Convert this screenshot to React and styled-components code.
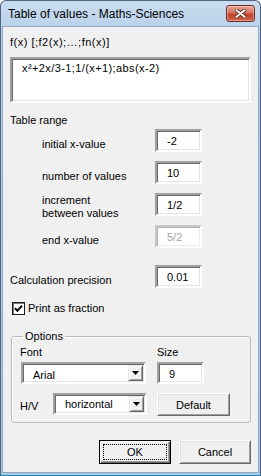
import React from 'react'
import styled, { createGlobalStyle } from 'styled-components'

const GlobalStyle = createGlobalStyle`
  html, body { margin:0; padding:0; background:#fff; }
  * { box-sizing:border-box; }
`

const Window = styled.div`
  width:261px;
  height:476px;
  border:1px solid #4a6481;
  border-bottom-color:#2a86b8;
  border-radius:6px 6px 0 0;
  background:linear-gradient(#cadcf0, #bad2eb 26px, #a9c8e6);
  padding:0 1px 2px;
  display:flex;
  flex-direction:column;
  font-family:"Liberation Sans", Arial, sans-serif;
  font-size:11px;
  color:#000;
`
const TitleBar = styled.div`
  height:25px;
  display:flex;
  align-items:center;
  justify-content:space-between;
  padding:0 4px 0 6px;
  font-size:12px;
`
const CloseButton = styled.div`
  width:29px;
  height:17px;
  border:1px solid #6e2b22;
  border-radius:3px;
  background:linear-gradient(#e8a796, #d5735d 45%, #c2412a 55%, #d0654c);
  box-shadow:inset 0 0 0 1px rgba(255,255,255,0.35);
  display:flex;
  align-items:center;
  justify-content:center;
`
const Client = styled.div`
  flex:1;
  background:#f0f0f0;
  border:1px solid #8ea8c5;
  padding:8px 7px 0;
  display:flex;
  flex-direction:column;
`
const Caption = styled.div`
  line-height:14px;
  margin-top:${p => p.$mt || 0}px;
  letter-spacing:${p => p.$wide ? 0.5 : 0}px;
  white-space:nowrap;
`
const FormulaBox = styled.div`
  margin-top:8px;
  width:241px;
  height:46px;
  background:#fff;
  border:2px solid;
  border-color:#a0a0a0 #fff #fff #a0a0a0;
  box-shadow:inset 1px 1px #696969, inset -1px -1px #e3e3e3;
  padding:2px 10px;
  line-height:14px;
  letter-spacing:0.4px;
  font-size:11px;
`
const RangeGrid = styled.div`
  margin-top:2px;
  padding-left:32px;
  display:grid;
  grid-template-columns:113px 47px;
  grid-auto-rows:23px;
  row-gap:9px;
`
const RowLabel = styled.div`
  padding-top:${p => p.$two ? 1 : 8}px;
  line-height:${p => p.$two ? 13 : 14}px;
  white-space:nowrap;
`
const Field = styled.div`
  width:${p => p.$w || 47}px;
  height:${p => p.$h || 23}px;
  background:#fff;
  border:2px solid;
  border-color:${p => p.$disabled ? '#c8c8c8 #fff #fff #c8c8c8' : '#a0a0a0 #fff #fff #a0a0a0'};
  box-shadow:${p => p.$disabled ? 'inset 1px 1px #b0b0b0, inset -1px -1px #ececec' : 'inset 1px 1px #696969, inset -1px -1px #e3e3e3'};
  padding:3px 0 0 10px;
  line-height:14px;
  color:${p => p.$disabled ? '#a3a3a3' : '#000'};
`
const PrecisionRow = styled.div`
  margin-top:17px;
  display:grid;
  grid-template-columns:145px 47px;
  height:23px;
`
const CheckRow = styled.div`
  margin-top:14px;
  display:flex;
  align-items:center;
  gap:3px;
  padding-left:2px;
  line-height:13px;
`
const CheckBox = styled.div`
  width:13px;
  height:13px;
  background:#fff;
  border:1px solid #1c1c1c;
  box-shadow:inset 1px 1px #7a7a7a;
  display:flex;
  align-items:center;
  justify-content:center;
`
const GroupBox = styled.fieldset`
  margin:14px 0 0 1px;
  width:240px;
  padding:2px 7px 6px 8px;
  border:1px solid #bcbcbc;
  border-radius:3px;
  box-shadow:1px 1px 0 #fff inset;
`
const Legend = styled.legend`
  margin-left:3px;
  padding:0 2px;
  line-height:14px;
  font-size:11px;
`
const OptRow = styled.div`
  display:flex;
  align-items:flex-start;
  margin-top:${p => p.$mt || 0}px;
`
const Cell = styled.div`
  width:${p => p.$w}px;
  flex:none;
  padding-left:${p => p.$pl || 0}px;
  padding-top:${p => p.$pt || 0}px;
  line-height:14px;
`
const Select = styled.div`
  width:${p => p.$w}px;
  height:22px;
  margin-left:${p => p.$ml || 0}px;
  background:#fff;
  border:2px solid;
  border-color:#a0a0a0 #fff #fff #a0a0a0;
  box-shadow:inset 1px 1px #696969, inset -1px -1px #e3e3e3;
  display:flex;
  align-items:stretch;
  padding:1px;
`
const SelectText = styled.div`
  flex:1;
  padding:${p => p.$up ? 1 : 3}px 0 0 9px;
  line-height:14px;
`
const ArrowButton = styled.div`
  width:15px;
  background:#f0f0f0;
  border:1px solid;
  border-color:#e3e3e3 #696969 #696969 #e3e3e3;
  box-shadow:inset 1px 1px #fff, inset -1px -1px #a0a0a0;
  display:flex;
  align-items:center;
  justify-content:center;
`
const Button = styled.div`
  width:${p => p.$w || 72}px;
  height:${p => p.$h || 24}px;
  background:#f0f0f0;
  border:1px solid;
  border-color:${p => p.$default ? '#000' : '#fff #696969 #696969 #fff'};
  box-shadow:${p => p.$default
    ? 'inset 1px 1px #fff, inset -1px -1px #696969, inset -2px -2px #a0a0a0'
    : 'inset 1px 1px #e3e3e3, inset -1px -1px #a0a0a0'};
  display:flex;
  align-items:center;
  justify-content:center;
  line-height:14px;
  outline:${p => p.$default ? '1px dotted #000' : 'none'};
  outline-offset:-5px;
`
const Footer = styled.div`
  margin-top:17px;
  display:flex;
  justify-content:flex-end;
  gap:8px;
`

const Arrow = () => (
  <svg width="7" height="4" viewBox="0 0 7 4"><path d="M0 0h7L3.5 4z" fill="#000" /></svg>
)

const rows = [
  { label: 'initial x-value', value: '-2' },
  { label: 'number of values', value: '10' },
  { label: <>increment<br />between values</>, value: '1/2', two: true },
  { label: 'end x-value', value: '5/2', disabled: true },
]

export default function App() {
  return (
    <>
      <GlobalStyle />
      <Window>
        <TitleBar>
          <span>Table of values - Maths-Sciences</span>
          <CloseButton>
            <svg width="11" height="9" viewBox="0 0 11 9">
              <path d="M1.5 1.2L9.5 7.8M9.5 1.2L1.5 7.8" stroke="#4a2018" strokeWidth="3.6" strokeLinecap="round" />
              <path d="M1.5 1.2L9.5 7.8M9.5 1.2L1.5 7.8" stroke="#fff" strokeWidth="2" strokeLinecap="round" />
            </svg>
          </CloseButton>
        </TitleBar>
        <Client>
          <Caption $wide>f(x) [;f2(x);…;fn(x)]</Caption>
          <FormulaBox>x²+2x/3-1;1/(x+1);abs(x-2)</FormulaBox>
          <Caption $mt={10}>Table range</Caption>
          <RangeGrid>
            {rows.map((r, i) => (
              <React.Fragment key={i}>
                <RowLabel $two={r.two}>{r.label}</RowLabel>
                <Field $disabled={r.disabled}>{r.value}</Field>
              </React.Fragment>
            ))}
          </RangeGrid>
          <PrecisionRow>
            <RowLabel>Calculation precision</RowLabel>
            <Field>0.01</Field>
          </PrecisionRow>
          <CheckRow>
            <CheckBox>
              <svg width="9" height="9" viewBox="0 0 9 9">
                <path d="M1 4.2L3.4 6.8L8 1.6" stroke="#000" strokeWidth="2" fill="none" />
              </svg>
            </CheckBox>
            <span>Print as fraction</span>
          </CheckRow>
          <GroupBox>
            <Legend>Options</Legend>
            <OptRow>
              <Cell $w={137}>Font</Cell>
              <Cell $w={73}>Size</Cell>
            </OptRow>
            <OptRow $mt={3}>
              <Cell $w={137}>
                <Select $w={125} $ml={1}>
                  <SelectText>Arial</SelectText>
                  <ArrowButton><Arrow /></ArrowButton>
                </Select>
              </Cell>
              <Field $h={22}>9</Field>
            </OptRow>
            <OptRow $mt={9}>
              <Cell $w={33} $pt={6}>H/V</Cell>
              <Cell $w={104}>
                <Select $w={94}>
                  <SelectText $up>horizontal</SelectText>
                  <ArrowButton><Arrow /></ArrowButton>
                </Select>
              </Cell>
              <Button $w={73} $h={23}>Default</Button>
            </OptRow>
          </GroupBox>
          <Footer>
            <Button $default>OK</Button>
            <Button>Cancel</Button>
          </Footer>
        </Client>
      </Window>
    </>
  )
}
